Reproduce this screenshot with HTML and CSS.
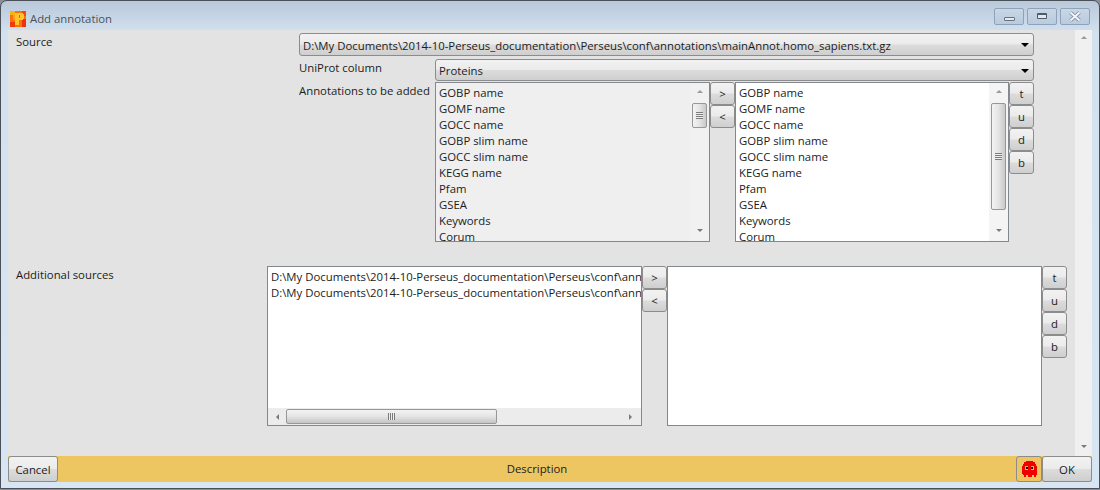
FILE: index.html
```html
<!DOCTYPE html>
<html>
  <head>
    <title>Add annotation</title>
    <link rel="stylesheet" href="styles.css">
  </head>
  <body>
    <div class="window">
      <div class="titlebar">
        <svg class="app-icon" width="16" height="16" viewBox="0 0 16 16" shape-rendering="crispEdges">
          <rect width="16" height="16" fill="#f9700c"/>
          <rect x="0" y="0" width="5" height="4" fill="#fdb015"/>
          <rect x="3" y="4" width="2" height="5" fill="#ffa012"/>
          <rect x="12" y="0" width="4" height="5" fill="#f44a08"/>
          <rect x="12" y="8" width="4" height="8" fill="#ee3306"/>
          <rect x="0" y="11" width="5" height="5" fill="#f23c08"/>
          <path d="M5 2h8v1h1v5h-1v1H9v5H5zM9 4v3h1V4z" fill="#ffc52a"/>
          <rect x="9" y="4" width="1" height="3" fill="#f4500a"/>
        </svg>
        <span class="title">Add annotation</span>
        <div class="caption-btns">
          <div class="caption-btn"><span class="cap-min"></span></div>
          <div class="caption-btn"><span class="cap-max"></span></div>
          <div class="caption-btn">
            <svg width="14" height="11" viewBox="0 0 14 11"><path d="M2.5 1.5l9 8M11.5 1.5l-9 8" fill="none" stroke="#77879a" stroke-width="3.6"/><path d="M2.5 1.5l9 8M11.5 1.5l-9 8" fill="none" stroke="#f4f7fa" stroke-width="2"/></svg>
          </div>
        </div>
      </div>

      <div class="client">
        <div class="form">
          <div class="form-row">
            <div class="row-label source-label">Source</div>
            <div class="source-fields">
              <div class="combo">
                <span>D:\My Documents\2014-10-Perseus_documentation\Perseus\conf\annotations\mainAnnot.homo_sapiens.txt.gz</span>
                <i class="arrow"></i>
              </div>
              <div class="sub-row uniprot-row">
                <div class="sub-label">UniProt column</div>
                <div class="combo combo-small"><span>Proteins</span><i class="arrow"></i></div>
              </div>
              <div class="sub-row">
                <div class="sub-label">Annotations to be added</div>
                <div class="picker">
                  <div class="list list-grey">
                    <div class="items">
                      <div>GOBP name</div><div>GOMF name</div><div>GOCC name</div><div>GOBP slim name</div><div>GOCC slim name</div><div>KEGG name</div><div>Pfam</div><div>GSEA</div><div>Keywords</div><div>Corum</div>
                    </div>
                    <div class="vscroll">
                      <i class="arrow-up"></i>
                      <div class="track"><div class="thumb thumb-short"><b class="grip-h"></b></div></div>
                      <i class="arrow-down"></i>
                    </div>
                  </div>
                  <div class="btn-col">
                    <button class="btn">&gt;</button>
                    <button class="btn">&lt;</button>
                  </div>
                  <div class="list list-right">
                    <div class="items">
                      <div>GOBP name</div><div>GOMF name</div><div>GOCC name</div><div>GOBP slim name</div><div>GOCC slim name</div><div>KEGG name</div><div>Pfam</div><div>GSEA</div><div>Keywords</div><div>Corum</div>
                    </div>
                    <div class="vscroll">
                      <i class="arrow-up"></i>
                      <div class="track"><div class="thumb thumb-long"><b class="grip-h"></b></div></div>
                      <i class="arrow-down"></i>
                    </div>
                  </div>
                  <div class="btn-col">
                    <button class="btn">t</button>
                    <button class="btn">u</button>
                    <button class="btn">d</button>
                    <button class="btn">b</button>
                  </div>
                </div>
              </div>
            </div>
          </div>

          <div class="form-row extra-row">
            <div class="row-label extra-label">Additional sources</div>
            <div class="picker">
              <div class="list list-extra list-extra-left">
                <div class="items">
                  <div>D:\My Documents\2014-10-Perseus_documentation\Perseus\conf\ann</div>
                  <div>D:\My Documents\2014-10-Perseus_documentation\Perseus\conf\ann</div>
                </div>
                <div class="hscroll">
                  <i class="arrow-left"></i>
                  <div class="htrack"><div class="hthumb"><b class="grip-v"></b></div></div>
                  <i class="arrow-right"></i>
                </div>
              </div>
              <div class="btn-col">
                <button class="btn">&gt;</button>
                <button class="btn">&lt;</button>
              </div>
              <div class="list list-extra"></div>
              <div class="btn-col">
                <button class="btn">t</button>
                <button class="btn">u</button>
                <button class="btn">d</button>
                <button class="btn">b</button>
              </div>
            </div>
          </div>
        </div>
        <div class="page-scroll">
          <i class="arrow-up"></i>
          <i class="arrow-down"></i>
        </div>
      </div>

      <div class="footer">
        <button class="btn footer-btn">Cancel</button>
        <div class="description">Description</div>
        <button class="btn ghost-btn">
          <svg width="15" height="16" viewBox="0 0 15 16" shape-rendering="crispEdges">
            <path d="M4 0h7v1h2v2h1v2h1v9h-1v2h-2v-2h-2v2H6v-2H4v2H2v-2H1v-1H0V5h1V3h1V1h2z" fill="#f00000"/>
            <rect x="3" y="5" width="3" height="4" fill="#e8b848"/>
            <rect x="9" y="5" width="3" height="4" fill="#e8b848"/>
            <rect x="4" y="6" width="2" height="2" fill="#2a1000"/>
            <rect x="9" y="6" width="2" height="2" fill="#2a1000"/>
          </svg>
        </button>
        <button class="btn footer-btn">OK</button>
      </div>
    </div>
  </body>
</html>
```

FILE: styles.css
```css
html,
body {
  margin: 0;
  height: 100%;
  background: #8a8f96;
}
body {
  font-family: "Open Sans", "Noto Sans", sans-serif;
  font-size: 11.35px;
  color: #1c1c1c;
  overflow: hidden;
}
.window {
  box-sizing: border-box;
  width: 1100px;
  height: 489px;
  display: flex;
  flex-direction: column;
  border: 1px solid #4a5058;
  border-radius: 7px 7px 0 0;
  padding: 0 7px 6px;
  background: linear-gradient(#b9c9da 0, #d3e1ef 32px, #d8e5f3 100%);
}

/* title bar */
.titlebar {
  height: 29px;
  flex: none;
  display: flex;
  align-items: center;
  padding-top: 6px;
  box-sizing: border-box;
}
.app-icon {
  margin: 0 4px 0 2px;
}
.title {
  color: #46525e;
}
.caption-btns {
  margin-left: auto;
  margin-right: 2px;
  margin-top: -5px;
  display: flex;
  gap: 3px;
}
.caption-btn {
  box-sizing: border-box;
  width: 30px;
  height: 17px;
  border: 1px solid #8ea3ba;
  border-radius: 2px;
  background: linear-gradient(#c9d7e6, #b9cbdd);
  display: flex;
  align-items: center;
  justify-content: center;
}
.cap-min {
  width: 9px;
  height: 2px;
  margin-top: 5px;
  border: 1px solid #66727f;
  border-radius: 1px;
  background: #e2e8ee;
}
.cap-max {
  width: 8px;
  height: 3px;
  border: 1px solid #4f5b68;
  border-top-width: 2px;
  border-radius: 1px;
  background: #e2e8ee;
}

/* client area */
.client {
  flex: 1;
  display: flex;
  background: #e3e3e3;
  min-height: 0;
}
.form {
  flex: 1;
  padding: 3px 0 0 8px;
  min-width: 0;
}
.form-row {
  display: flex;
}
.row-label {
  line-height: 18px;
}
.source-label {
  width: 283px;
  flex: none;
}
.source-fields {
  width: 735px;
}
.sub-row {
  display: flex;
}
.uniprot-row {
  margin: 3px 0 1px;
}
.sub-label {
  width: 136px;
  flex: none;
  line-height: 18px;
  white-space: nowrap;
}
.combo {
  box-sizing: border-box;
  height: 23px;
  display: flex;
  align-items: center;
  justify-content: space-between;
  padding: 1px 4px 0 3px;
  border: 1px solid #8c8c8c;
  border-radius: 3px;
  background: linear-gradient(#f2f2f2, #ebebeb 48%, #dcdcdc 52%, #cfcfcf);
  white-space: nowrap;
}
.combo-small {
  height: 22px;
  flex: 1;
}
.arrow {
  width: 0;
  height: 0;
  border: 4px solid transparent;
  border-top: 4px solid #000;
  border-bottom: 0;
}

/* pickers */
.picker {
  display: flex;
  align-items: flex-start;
}
.list {
  box-sizing: border-box;
  border: 1px solid #828790;
  background: #fff;
  display: flex;
  overflow: hidden;
  height: 160px;
}
.list-grey {
  background: #efefef;
  width: 275px;
}
.list-right {
  width: 274px;
}
.items {
  flex: 1;
  min-width: 0;
  padding: 2px 0 0 3px;
  line-height: 16px;
  white-space: nowrap;
  overflow: hidden;
}
.btn-col {
  display: flex;
  flex-direction: column;
  width: 25px;
}
.btn {
  box-sizing: border-box;
  width: 25px;
  height: 23px;
  padding: 0;
  border: 1px solid #8c8c8c;
  border-radius: 3px;
  background: linear-gradient(#f2f2f2, #ebebeb 48%, #dcdcdc 52%, #cfcfcf);
  font: inherit;
  color: inherit;
}

/* scrollbars */
.vscroll {
  width: 19px;
  flex: none;
  display: flex;
  flex-direction: column;
  align-items: center;
  background: #f1f1f1;
}
.list-right .vscroll {
  background: #f4f4f4;
}
.track {
  flex: 1;
  width: 100%;
  display: flex;
  justify-content: center;
}
.thumb {
  box-sizing: border-box;
  width: 15px;
  margin-top: 2px;
  border: 1px solid #979797;
  border-radius: 2px;
  background: linear-gradient(90deg, #f3f3f3, #e4e4e4 50%, #c9c9c9);
  display: flex;
  align-items: center;
  justify-content: center;
}
.thumb-short {
  height: 25px;
}
.thumb-long {
  height: 107px;
}
.grip-h {
  width: 7px;
  height: 7px;
  background: repeating-linear-gradient(#7c7c7c 0 1px, #eee 1px 2px);
}
.arrow-up,
.arrow-down {
  width: 0;
  height: 0;
  border: 3px solid transparent;
  flex: none;
}
.arrow-up {
  margin: 7px 0 8px;
  border-top: 0;
  border-bottom: 3px solid #9a9a9a;
}
.arrow-down {
  margin: 0 0 9px;
  border-bottom: 0;
  border-top: 3px solid #7a7a7a;
}
.page-scroll {
  width: 17px;
  flex: none;
  display: flex;
  flex-direction: column;
  align-items: center;
  justify-content: space-between;
  background: #f0f0f0;
}
.page-scroll .arrow-up {
  margin: 6px 0 0;
}
.page-scroll .arrow-down {
  margin: 0 0 8px;
}

/* additional sources */
.extra-row {
  margin-top: 24px;
}
.extra-label {
  width: 251px;
  flex: none;
}
.list-extra {
  width: 375px;
}
.list-extra-left {
  flex-direction: column;
}
.hscroll {
  height: 17px;
  flex: none;
  display: flex;
  align-items: center;
  background: #ececec;
}
.htrack {
  flex: 1;
}
.hthumb {
  box-sizing: border-box;
  width: 211px;
  height: 15px;
  border: 1px solid #979797;
  border-radius: 2px;
  background: linear-gradient(#f3f3f3, #e4e4e4 50%, #c4c4c4);
  display: flex;
  align-items: center;
  justify-content: center;
}
.grip-v {
  width: 7px;
  height: 7px;
  background: repeating-linear-gradient(90deg, #7c7c7c 0 1px, #eee 1px 2px);
}
.arrow-left,
.arrow-right {
  width: 0;
  height: 0;
  border: 3px solid transparent;
  flex: none;
}
.arrow-left {
  margin: 0 7px 0 8px;
  border-left: 0;
  border-right: 3px solid #7a7a7a;
}
.arrow-right {
  margin: 0 9px 0 0;
  border-right: 0;
  border-left: 3px solid #7a7a7a;
}

/* footer */
.footer {
  flex: none;
  height: 26px;
  display: flex;
  background: #edc662;
}
.footer-btn {
  width: 50px;
  height: 26px;
}
.description {
  flex: 1;
  text-align: center;
  line-height: 26px;
}
.ghost-btn {
  width: 26px;
  height: 26px;
  background: #edc662;
  display: flex;
  align-items: center;
  justify-content: center;
}
```
